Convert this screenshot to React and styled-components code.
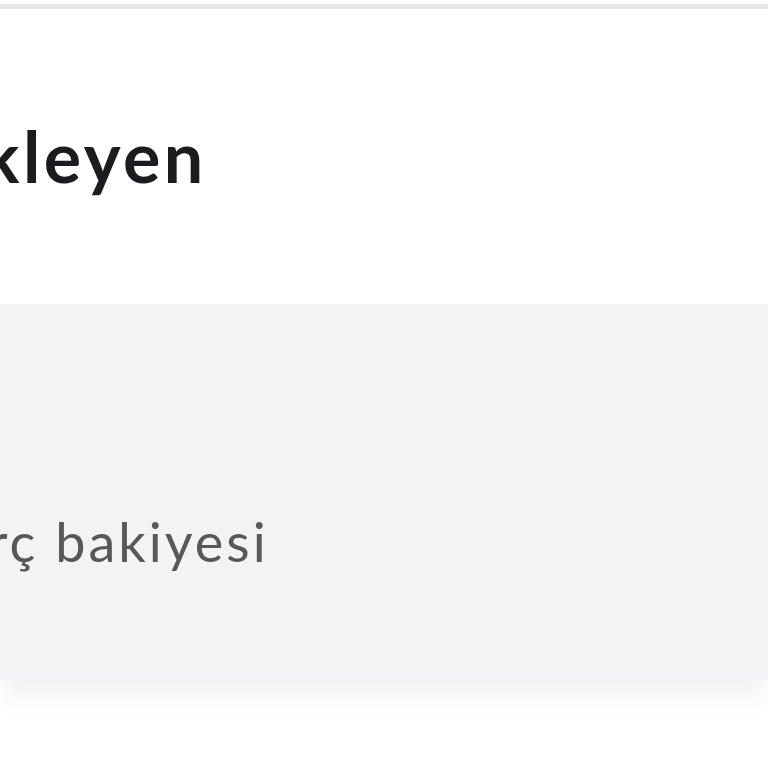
import React from 'react';
import styled, { createGlobalStyle } from 'styled-components';

const GlobalStyle = createGlobalStyle`
    html, body {
        margin: 0;
        padding: 0;
        background: #ffffff;
        overflow: hidden;
    }
    body {
        font-family: Lato, "Noto Sans", sans-serif;
    }
`;

const Page = styled.div`
    width: 768px;
    height: 768px;
    overflow: hidden;
    background: #ffffff;
`;
const TopRule = styled.div`
    margin-top: 4px;
    height: 5px;
    background: #e7e7e7;
`;
const Header = styled.div`
    height: 295px;
    padding-top: 105px;
    box-sizing: border-box;
`;
const Title = styled.h1`
    margin: 0 0 0 ${props => props.shift}px;
    font-size: 70px;
    line-height: 84px;
    font-weight: 700;
    color: #1c1c1e;
    letter-spacing: 3.5px;
    white-space: nowrap;
`;
const Panel = styled.div`
    height: 376px;
    background: #f3f3f5;
    box-shadow: 0 18px 24px rgba(0, 0, 0, 0.05);
    padding-top: 206px;
    box-sizing: border-box;
`;
const Label = styled.div`
    margin-left: ${props => props.shift}px;
    font-size: 54px;
    line-height: 64px;
    font-weight: 400;
    color: #57575c;
    letter-spacing: 3px;
    white-space: nowrap;
`;

export default function App(){
    return (
        <Page>
            <GlobalStyle />
            <TopRule />
            <Header>
                <Title shift={-18}>kleyen</Title>
            </Header>
            <Panel>
                <Label shift={-12}>rç bakiyesi</Label>
            </Panel>
        </Page>
    );
}
